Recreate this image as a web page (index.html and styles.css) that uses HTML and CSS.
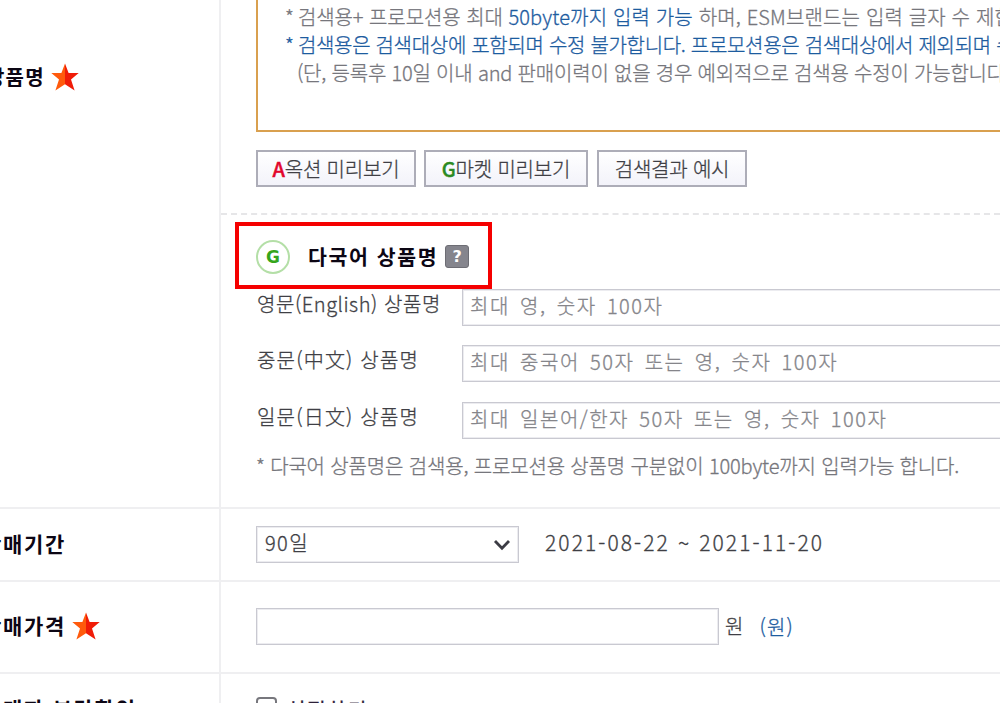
FILE: index.html
```html
<!DOCTYPE html>
<html lang="ko">
<head>
<meta charset="utf-8">
<title>상품 등록</title>
<link rel="stylesheet" href="styles.css">
</head>
<body>
<svg class="defs" width="0" height="0"><defs><symbol id="star" viewBox="0 0 28 28"><path d="M14 .5 17.6 10H27.7L20 16.6 23.6 27.5 14 21.3Z" fill="#f01c08"/><path d="M14 .5 10.4 10H.3L8 16.6 4.4 27.5 14 21.3Z" fill="#ff5a0c"/></symbol></defs></svg>
<main class="form">
  <section class="row row-name">
    <div class="head"><span class="label l1">상품명</span><svg class="star"><use href="#star"/></svg></div>
    <div class="cell">
      <div class="guide">
        <p class="line g1">* <span class="t1">검색용+ 프로모션용 최대 <em>50byte까지 입력 가능 </em><span class="tail">하며, ESM브랜드는 입력 글자 수 제한</span></span></p>
        <p class="line g2">* <span class="t2">검색용은 검색대상에 포함되며 수정 불가합니다. 프로모션용은 검색대상에서 제외되며 수</span></p>
        <p class="line g3"><span class="t3">(단, 등록후 10일 이내 and 판매이력이 없을 경우 예외적으로 검색용 수정이 가능합니다</span></p>
      </div>
      <div class="buttons">
        <button class="btn b1"><b class="red">A</b>옥션 미리보기</button>
        <button class="btn b2"><b class="green">G</b>마켓 미리보기</button>
        <button class="btn b3">검색결과 예시</button>
      </div>
      <div class="multi">
        <div class="title"><span class="g-mark">G</span><strong class="title-text">다국어 상품명</strong><span class="help">?</span></div>
        <div class="field"><span class="name n1">영문(English) 상품명</span><span class="input">최대 영, 숫자 100자</span></div>
        <div class="field"><span class="name">중문(中文) 상품명</span><span class="input">최대 중국어 50자 또는 영, 숫자 100자</span></div>
        <div class="field"><span class="name">일문(日文) 상품명</span><span class="input">최대 일본어/한자 50자 또는 영, 숫자 100자</span></div>
        <p class="note">* 다국어 상품명은 검색용, 프로모션용 상품명 구분없이 100byte까지 입력가능 합니다.</p>
      </div>
    </div>
  </section>
  <section class="row row-period">
    <div class="head"><span class="label">판매기간</span></div>
    <div class="cell">
      <div class="select"><span>90일</span><svg width="18" height="12" viewBox="0 0 18 12"><path d="M2 2 9 9.3 16 2" fill="none" stroke="#3c3c44" stroke-width="2.8"/></svg></div>
      <span class="dates">2021-08-22 ~ 2021-11-20</span>
    </div>
  </section>
  <section class="row row-price">
    <div class="head"><span class="label">판매가격</span><svg class="star"><use href="#star"/></svg></div>
    <div class="cell"><div class="price"></div><span class="won">원</span><span class="won-blue">(원)</span></div>
  </section>
  <section class="row row-discount">
    <div class="head"><span class="label">판매자 부담할인</span></div>
    <div class="cell"><span class="check"></span><span class="check-label">설정하기</span></div>
  </section>
</main>
</body>
</html>
```
FILE: styles.css
```css
* { box-sizing: border-box; }
body { margin: 0; width: 1000px; height: 703px; overflow: hidden; background: #fff; color: #3f3f45; font: 300 20px/28px "Noto Sans CJK KR", sans-serif; -webkit-text-stroke: .3px; }
.defs { position: absolute; }
p { margin: 0; }
.form { width: 1000px; height: 703px; overflow: hidden; display: flex; flex-direction: column; }
.row { display: grid; grid-template-columns: 219px 781px; flex: none; border-bottom: 2px solid #efeff1; white-space: nowrap; }
.cell { border-left: 2px solid #efeff1; padding-left: 35px; overflow: hidden; }
.head { display: flex; align-items: center; overflow: hidden; color: #0c0614; -webkit-text-stroke: 0; }
.label { margin: -4px 0 0 -18px; font-weight: 700; font-size: 21px; letter-spacing: 1.7px; }
.l1 { font-size: 20px; letter-spacing: 1.2px; margin: 0 0 0 -14px; }
.star { width: 28px; height: 28px; flex: none; margin-left: 6px; }

.row-name { height: 509px; }
.row-name .head { align-items: flex-start; padding-top: 63px; }
.guide { height: 132px; width: 900px; border: solid #d9a04f; border-width: 0 0 2px 2px; padding: 3px 0 0 27px; color: #76767c; }
.guide em { font-style: normal; color: #1d5c9f; letter-spacing: .15px; }
.g1, .g2 { display: flex; gap: 4px; }
.g2 { color: #1d5c9f; }
.g3 { padding-left: 12px; }
.t1 { letter-spacing: -.07px; }
.tail { letter-spacing: .15px; }
.t2 { letter-spacing: -.31px; }
.t3 { letter-spacing: -.2px; }
.buttons { display: flex; padding-top: 18px; }
.btn { height: 37px; padding: 0; border: 2px solid #adadb8; background: linear-gradient(#fff, #f3f3fa); color: #3f3f45; font: inherit; letter-spacing: -.2px; -webkit-text-stroke: .3px; }
.btn b { font-weight: 500; -webkit-text-stroke: .4px; }
.b1 { width: 160px; margin-right: 8px; }
.b2 { width: 164px; margin-right: 9px; }
.b3 { width: 150px; }
.red { color: #e2062c; }
.green { color: #2b8a22; }
.multi { margin: 26px 0 0 -35px; padding-left: 35px; border-top: 2px dashed #e6e6e8; }
.title { display: flex; align-items: center; width: 257px; height: 67px; margin: 7px 0 0 -21px; padding: 2px 0 0 17px; border: 4px solid #f50000; }
.g-mark { width: 34px; height: 34px; border: 2px solid #b4dfa7; border-radius: 50%; color: #35a51c; font: 700 17px/30px "DejaVu Sans", sans-serif; text-align: center; -webkit-text-stroke: 0; }
.title-text { margin: -2px 0 0 18px; color: #0c0614; font-weight: 700; font-size: 20.5px; letter-spacing: 1.6px; -webkit-text-stroke: 0; }
.help { width: 24px; height: 23px; margin-left: 7px; border: 1px solid #6d6d74; border-radius: 3px; background: #85858d; color: #fff; font: 700 16px/21px "DejaVu Sans", sans-serif; text-align: center; -webkit-text-stroke: 0; }
.field { display: flex; height: 37px; margin-bottom: 19.3px; }
.name { flex: none; width: 206px; padding: 1px 0 0 1px; letter-spacing: 1.2px; }
.n1 { letter-spacing: .55px; }
.input { flex: none; width: 600px; border: 1px solid #c9c9d1; box-shadow: inset 0 0 0 1px #ececf0; padding: 2px 0 0 7px; color: #85858a; letter-spacing: 1.5px; word-spacing: 3.2px; }
.note { margin-top: -6px; color: #76767c; letter-spacing: -.16px; }

.row-period { height: 73px; }
.row-period .cell, .row-price .cell { display: flex; align-items: center; }
.select { width: 263px; height: 37px; border: 1px solid #c9c9d1; box-shadow: inset 0 0 0 1px #ececf0; display: flex; align-items: center; justify-content: space-between; padding: 0 7px 0 8px; letter-spacing: 1.4px; }
.select span { margin-top: -3px; }
.dates { margin: -6px 0 0 26px; font-size: 21px; letter-spacing: 2.1px; }

.row-price { height: 92px; }
.row-price .cell { padding-bottom: 2px; }
.row-price .head { padding-bottom: 2px; }
.row-price .label { margin-top: -2px; }
.price { width: 463px; height: 37px; border: 1px solid #c9c9d1; box-shadow: inset 0 0 0 1px #ececf0; }
.won { margin-left: 6px; }
.won-blue { margin: 2px 0 0 16px; color: #1d5c9f; letter-spacing: 1.2px; }

.row-discount { height: 72px; }
.row-discount .head { align-items: flex-start; padding-top: 24px; }
.row-discount .cell { display: flex; padding-top: 23px; }
.check { width: 21px; height: 21px; border: 2px solid #77777d; border-radius: 4px; }
.check-label { margin: -1px 0 0 10px; color: #2d2038; font-weight: 400; letter-spacing: 1.9px; }
```
